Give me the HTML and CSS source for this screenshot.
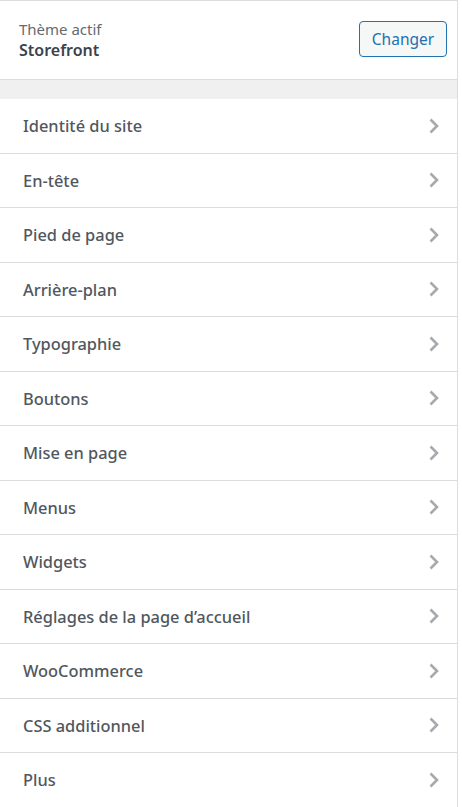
FILE: index.html
```html
<!DOCTYPE html>
<html lang="fr">
<head>
<meta charset="utf-8">
<title>Personnaliser</title>
<link rel="stylesheet" href="styles.css">
</head>
<body>
<div class="panel">
  <div class="theme-info">
    <div class="theme-text">
      <span class="theme-label">Thème actif</span>
      <span class="theme-name">Storefront</span>
    </div>
    <button class="change-btn" type="button">Changer</button>
  </div>
  <div class="spacer"></div>
  <ul class="sections">
    <li class="section"><span>Identité du site</span><svg class="chev" viewBox="0 0 10 16"><path d="M1.5 1.5 L8 8 L1.5 14.5"/></svg></li>
    <li class="section"><span>En-tête</span><svg class="chev" viewBox="0 0 10 16"><path d="M1.5 1.5 L8 8 L1.5 14.5"/></svg></li>
    <li class="section"><span>Pied de page</span><svg class="chev" viewBox="0 0 10 16"><path d="M1.5 1.5 L8 8 L1.5 14.5"/></svg></li>
    <li class="section"><span>Arrière-plan</span><svg class="chev" viewBox="0 0 10 16"><path d="M1.5 1.5 L8 8 L1.5 14.5"/></svg></li>
    <li class="section"><span>Typographie</span><svg class="chev" viewBox="0 0 10 16"><path d="M1.5 1.5 L8 8 L1.5 14.5"/></svg></li>
    <li class="section"><span>Boutons</span><svg class="chev" viewBox="0 0 10 16"><path d="M1.5 1.5 L8 8 L1.5 14.5"/></svg></li>
    <li class="section"><span>Mise en page</span><svg class="chev" viewBox="0 0 10 16"><path d="M1.5 1.5 L8 8 L1.5 14.5"/></svg></li>
    <li class="section"><span>Menus</span><svg class="chev" viewBox="0 0 10 16"><path d="M1.5 1.5 L8 8 L1.5 14.5"/></svg></li>
    <li class="section"><span>Widgets</span><svg class="chev" viewBox="0 0 10 16"><path d="M1.5 1.5 L8 8 L1.5 14.5"/></svg></li>
    <li class="section"><span>Réglages de la page d’accueil</span><svg class="chev" viewBox="0 0 10 16"><path d="M1.5 1.5 L8 8 L1.5 14.5"/></svg></li>
    <li class="section"><span>WooCommerce</span><svg class="chev" viewBox="0 0 10 16"><path d="M1.5 1.5 L8 8 L1.5 14.5"/></svg></li>
    <li class="section"><span>CSS additionnel</span><svg class="chev" viewBox="0 0 10 16"><path d="M1.5 1.5 L8 8 L1.5 14.5"/></svg></li>
    <li class="section"><span>Plus</span><svg class="chev" viewBox="0 0 10 16"><path d="M1.5 1.5 L8 8 L1.5 14.5"/></svg></li>
  </ul>
</div>
</body>
</html>
```

FILE: styles.css
```css
html, body {
  margin: 0;
  padding: 0;
  background: #ffffff;
}
body {
  font-family: "Noto Sans", "Open Sans", sans-serif;
  width: 462px;
  height: 807px;
  overflow: hidden;
}
.panel {
  width: 457px;
  border-right: 1px solid #dcdcde;
  border-top: 1px solid #dcdcde;
  background: #f0f0f1;
  min-height: 806px;
}
.theme-info {
  display: flex;
  align-items: center;
  justify-content: space-between;
  height: 78px;
  padding: 0 10px 0 19px;
  background: #ffffff;
  border-bottom: 1px solid #dcdcde;
}
.theme-text {
  display: flex;
  flex-direction: column;
  margin-top: -1px;
}
.theme-label {
  font-size: 15px;
  line-height: 20px;
  color: #646970;
}
.theme-name {
  font-size: 16px;
  line-height: 22px;
  font-weight: 600;
  color: #3c434a;
}
.change-btn {
  width: 88px;
  height: 36px;
  margin-top: -2px;
  border: 1px solid #2271b1;
  border-radius: 4px;
  background: #f6f7f7;
  color: #2271b1;
  font-family: inherit;
  font-size: 15.5px;
  padding: 0;
}
.spacer {
  height: 19px;
}
.sections {
  list-style: none;
  margin: 0;
  padding: 0;
  background: #ffffff;
}
.section {
  display: flex;
  align-items: center;
  justify-content: space-between;
  height: 53.5px;
  padding: 0 18px 0 23px;
  border-bottom: 1px solid #dcdcde;
  font-size: 16.4px;
  font-weight: 500;
  color: #50575e;
}
.section:last-child {
  border-bottom: none;
}
.chev {
  width: 10px;
  height: 16px;
  fill: none;
  stroke: #a7aaad;
  stroke-width: 2.6;
}
```
